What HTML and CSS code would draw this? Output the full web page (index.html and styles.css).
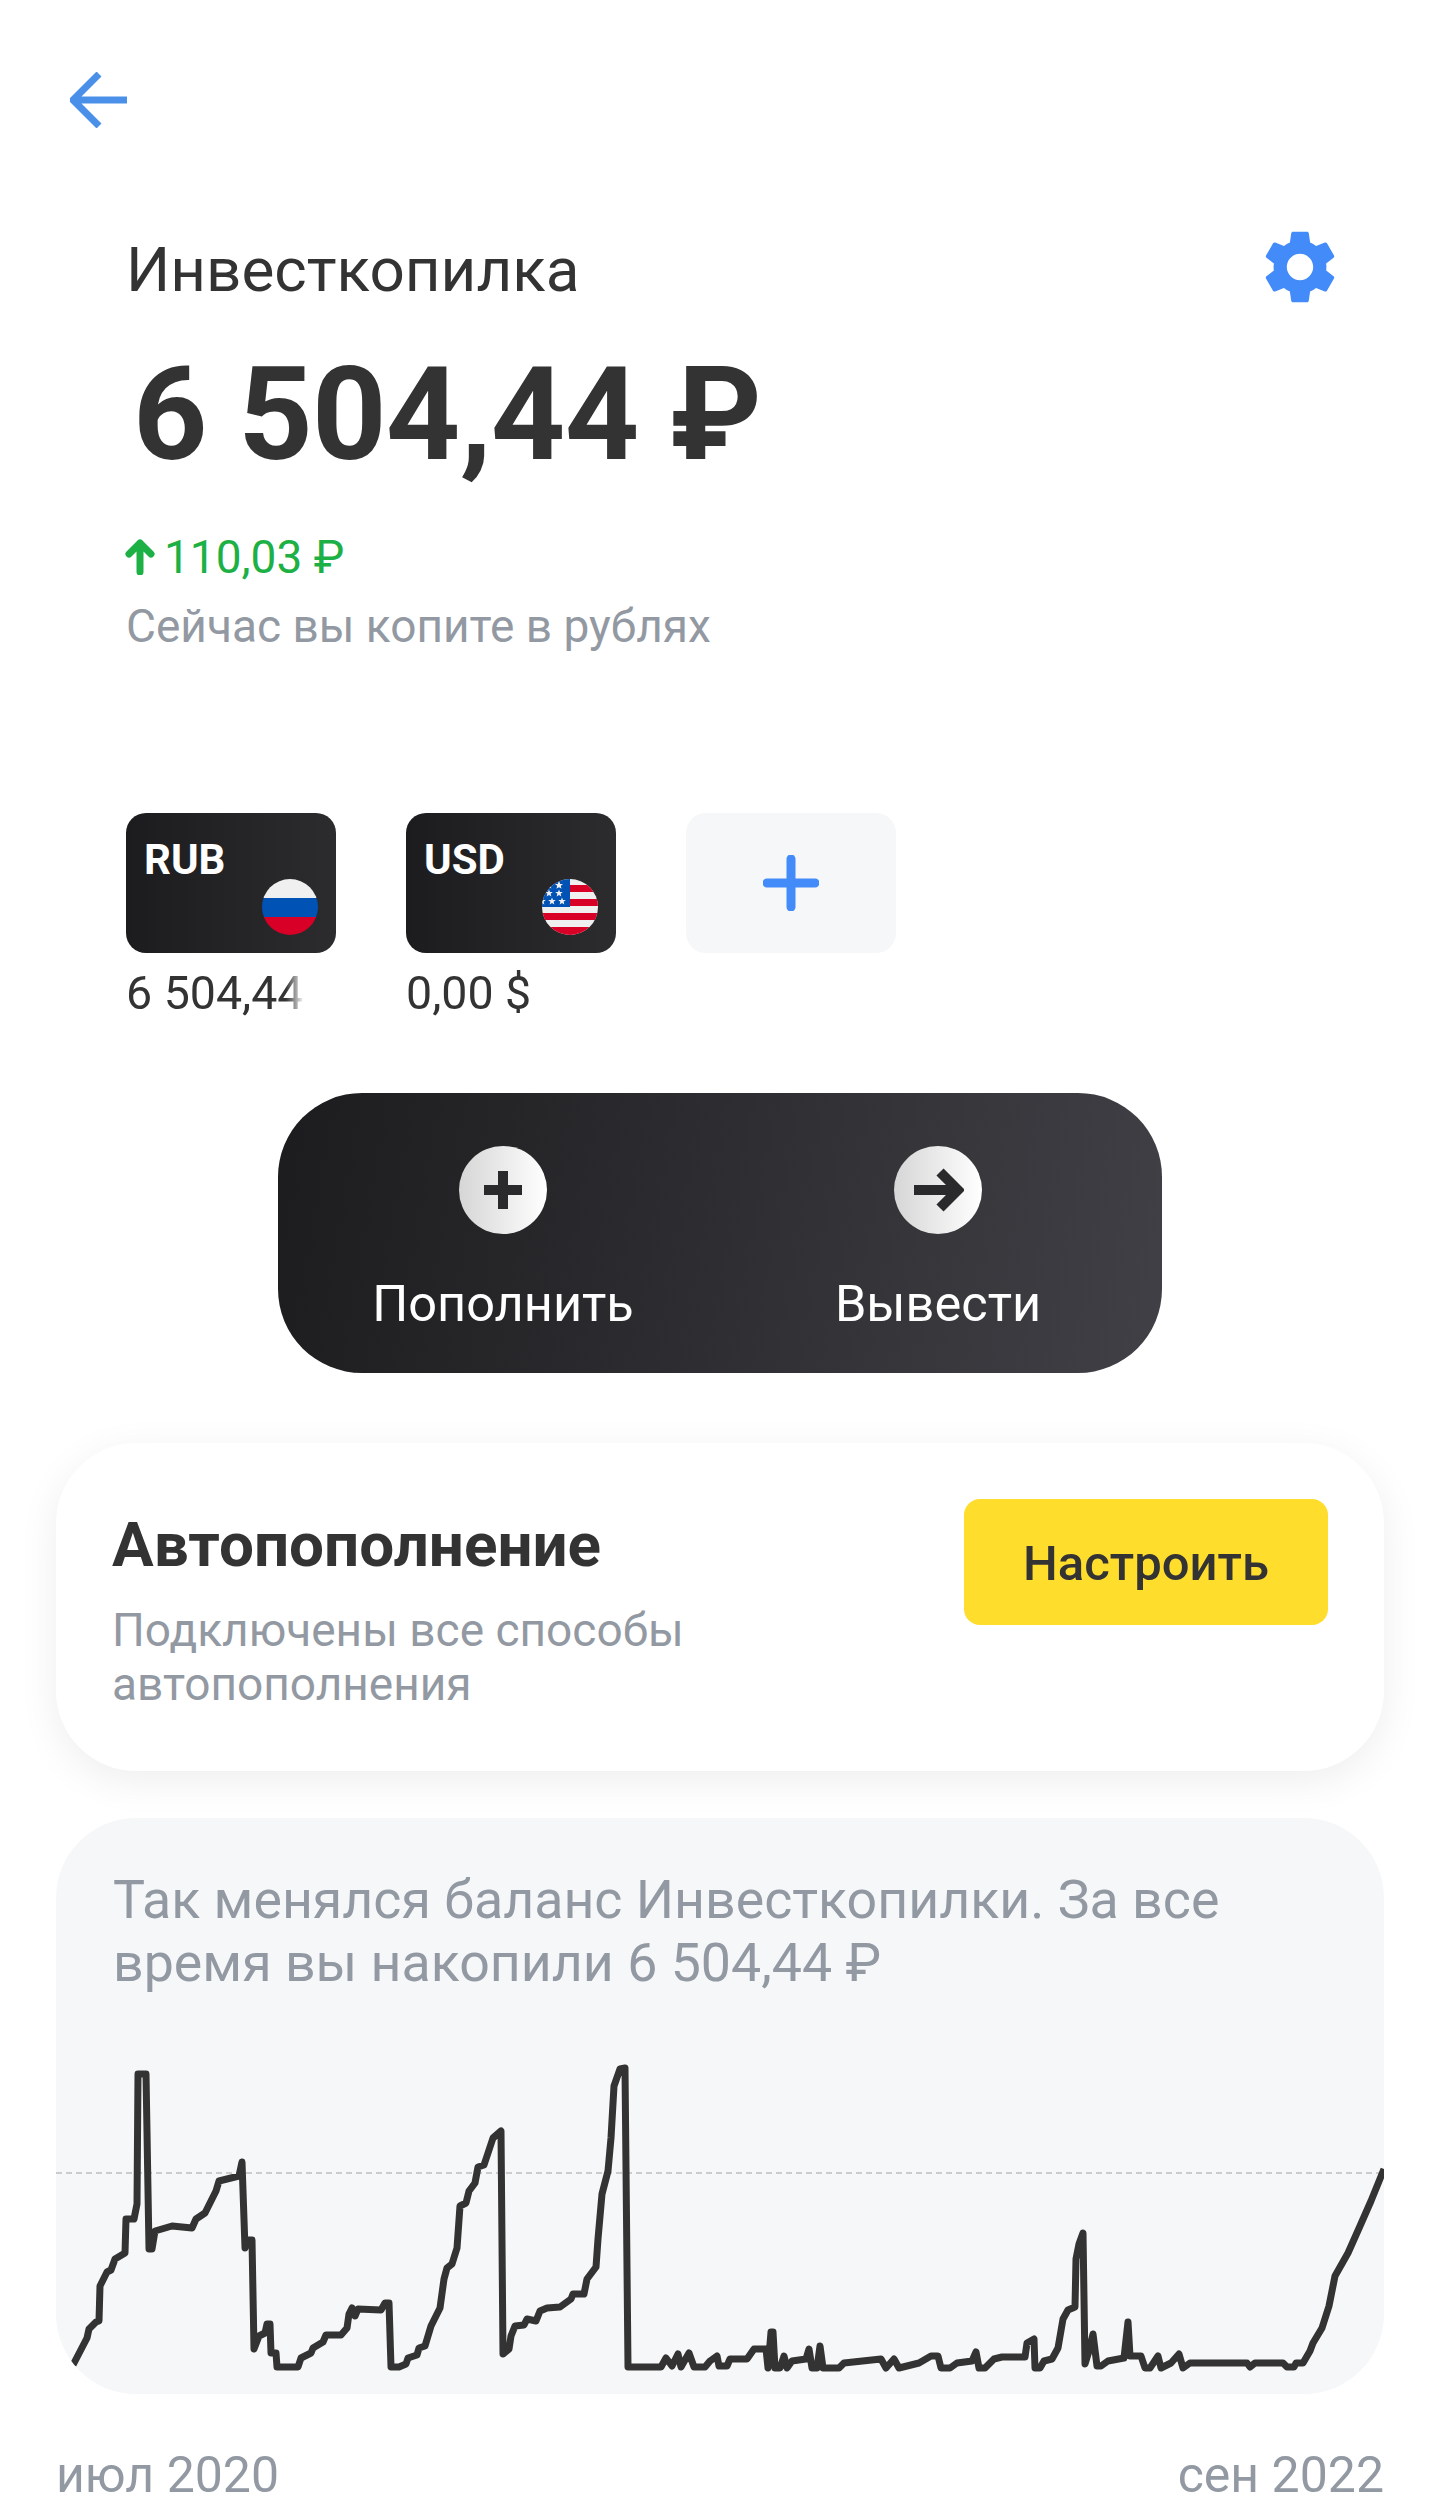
FILE: index.html
```html
<!DOCTYPE html>
<html lang="ru">
<head>
  <meta charset="UTF-8">
  <meta name="viewport" content="width=device-width, initial-scale=1.0">
  <title>Инвесткопилка</title>
  <link rel="stylesheet" href="styles.css">
</head>
<body>
  <div class="screen">
    <div class="topbar">
      <svg class="back-icon" viewBox="0 0 58 56" width="58" height="56"><path d="M57 28H3M29 2L3 28l26 26"/></svg>
    </div>

    <div class="head">
      <h1 class="title">Инвесткопилка</h1>
      <svg class="gear-icon" viewBox="0 0 24 24" width="88" height="88"><path d="M19.14 12.94c.04-.3.06-.61.06-.94 0-.32-.02-.64-.07-.94l2.03-1.58c.18-.14.23-.41.12-.61l-1.92-3.32c-.12-.22-.37-.29-.59-.22l-2.39.96c-.5-.38-1.03-.7-1.62-.94l-.36-2.54c-.04-.24-.24-.41-.48-.41h-3.84c-.24 0-.43.17-.47.41l-.36 2.54c-.59.24-1.13.57-1.62.94l-2.39-.96c-.22-.08-.47 0-.59.22L2.74 8.87c-.12.21-.08.47.12.61l2.03 1.58c-.05.3-.09.63-.09.94s.02.64.07.94l-2.03 1.58c-.18.14-.23.41-.12.61l1.92 3.32c.12.22.37.29.59.22l2.39-.96c.5.38 1.03.7 1.62.94l.36 2.54c.05.24.24.41.48.41h3.84c.24 0 .44-.17.47-.41l.36-2.54c.59-.24 1.13-.56 1.62-.94l2.39.96c.22.08.47 0 .59-.22l1.92-3.32c.12-.22.07-.47-.12-.61l-2.01-1.58zM12 15.6c-1.98 0-3.6-1.62-3.6-3.6s1.62-3.6 3.6-3.6 3.6 1.62 3.6 3.6-1.62 3.6-3.6 3.6z"/></svg>
    </div>

    <div class="amount">6 504,44 ₽</div>
    <div class="profit">
      <svg class="profit-icon" viewBox="0 0 30 36" width="30" height="36"><path d="M15 33V4M4 15L15 4l11 11"/></svg>
      <span>110,03 ₽</span>
    </div>
    <div class="note">Сейчас вы копите в рублях</div>

    <div class="tiles">
      <div class="tile-item">
        <div class="tile">
          <span class="tile-code">RUB</span>
          <svg class="flag" viewBox="0 0 56 56" width="56" height="56">
            <clipPath id="flag-ru"><circle cx="28" cy="28" r="28"/></clipPath>
            <g clip-path="url(#flag-ru)">
              <rect width="56" height="19" fill="#f0f0f0"/>
              <rect y="19" width="56" height="19" fill="#0052b4"/>
              <rect y="38" width="56" height="18" fill="#d80027"/>
            </g>
          </svg>
        </div>
        <div class="tile-amount">6 504,44</div>
      </div>
      <div class="tile-item">
        <div class="tile">
          <span class="tile-code">USD</span>
          <svg class="flag" viewBox="0 0 56 56" width="56" height="56">
            <clipPath id="flag-us"><circle cx="28" cy="28" r="28"/></clipPath>
            <g clip-path="url(#flag-us)">
              <rect width="56" height="56" fill="#f0f0f0"/>
              <rect x="28" y="6" width="28" height="7" fill="#d80027"/>
              <rect x="28" y="20" width="28" height="7" fill="#d80027"/>
              <rect y="34" width="56" height="7" fill="#d80027"/>
              <rect y="48" width="56" height="8" fill="#d80027"/>
              <rect width="28" height="28" fill="#0052b4"/>
              <g fill="#f0f0f0">
                <path id="star" d="M7 2.500l1 2.600h2.800L8.600 6.800l.8 2.700L7 7.900 4.600 9.500l.8-2.700L3.200 5.100H6z"/>
                <use href="#star" x="10"/>
                <use href="#star" x="10" y="0"/>
                <use href="#star" x="0" y="8"/>
                <use href="#star" x="10" y="8"/>
                <use href="#star" x="-7" y="16"/>
                <use href="#star" x="3" y="16"/>
                <use href="#star" x="13" y="16"/>
              </g>
            </g>
          </svg>
        </div>
        <div class="tile-amount">0,00 $</div>
      </div>
      <div class="tile-item">
        <div class="tile tile-add">
          <svg class="add-icon" viewBox="0 0 56 56" width="56" height="56"><path d="M28 4v48M4 28h48"/></svg>
        </div>
      </div>
    </div>

    <div class="actions">
      <div class="action">
        <div class="action-circle">
          <svg class="action-icon" viewBox="0 0 44 44" width="44" height="44"><path d="M22 3v38M3 22h38"/></svg>
        </div>
        <div class="action-label">Пополнить</div>
      </div>
      <div class="action">
        <div class="action-circle">
          <svg class="action-icon" viewBox="0 0 52 44" width="52" height="44"><path d="M2 22h42M28 4l18 18-18 18"/></svg>
        </div>
        <div class="action-label">Вывести</div>
      </div>
    </div>

    <div class="card">
      <div class="card-text">
        <h2 class="card-title">Автопополнение</h2>
        <p class="card-note">Подключены все способы автопополнения</p>
      </div>
      <button class="setup-btn">Настроить</button>
    </div>

    <div class="chart-panel">
      <p class="chart-text">Так менялся баланс Инвесткопилки. За все время вы накопили 6 504,44 ₽</p>
      <svg class="chart" viewBox="0 0 1328 362" width="1328" height="362">
        <line class="chart-avg" x1="0" y1="142" x2="1328" y2="142"/>
        <polyline class="chart-line" points="17,334 31,307 33,298 40,291 43,290 44,255 51,241 55,239 59,228 69,222 70,188 78,188 81,173 82,43 90,43 93,218 96,218 99,200 116,195 136,197 140,188 149,182 160,160 163,150 183,145 186,131 189,217 192,209 196,209 198,318 203,305 209,302 211,293 214,293 215,322 220,322 221,336 242,336 245,327 255,322 257,317 267,311 270,304 285,304 291,297 293,283 296,277 299,285 302,278 325,279 329,272 333,272 335,336 343,336 350,333 352,327 361,324 363,317 369,315 375,295 384,277 388,248 391,237 396,233 401,217 404,175 410,172 413,160 419,152 422,136 428,134 437,107 445,100 447,323 453,318 455,305 459,295 468,294 471,288 480,290 484,280 491,277 504,276 515,268 517,263 528,263 531,248 540,236 542,208 546,163 552,140 555,107 558,55 564,38 569,37 572,336 605,336 610,327 616,335 622,323 625,336 633,322 638,336 649,336 654,330 661,325 663,335 671,335 674,328 691,328 698,318 710,318 712,337 715,301 717,301 719,337 724,337 728,325 731,337 736,330 750,328 753,318 756,337 761,337 764,315 767,337 783,337 788,332 825,328 830,337 838,328 843,337 863,332 875,325 882,325 885,337 894,337 901,332 916,330 920,321 923,337 929,337 938,328 946,326 969,326 971,312 978,308 979,337 984,337 988,330 996,328 1002,317 1007,288 1012,279 1019,276 1020,228 1023,213 1027,202 1029,333 1033,320 1037,303 1041,335 1045,335 1052,330 1068,327 1072,291 1074,325 1085,325 1089,337 1094,337 1102,325 1105,337 1115,332 1123,323 1127,337 1134,332 1191,332 1194,336 1199,332 1227,332 1231,336 1238,336 1240,332 1247,332 1254,320 1257,312 1266,297 1273,275 1279,245 1292,222 1304,195 1315,170 1328,138"/>
      </svg>
    </div>

    <div class="chart-axis">
      <span>июл 2020</span>
      <span>сен 2022</span>
    </div>
  </div>
</body>
</html>
```

FILE: styles.css
```css
body {
  margin: 0;
  background-color: white;
  font-family: 'Roboto', sans-serif;
  color: #333;
}

.screen {
  width: 1439px;
  height: 2505px;
  overflow: hidden;
}

.topbar {
  padding: 72px 0 0 70px;
  height: 56px;
}

.back-icon {
  display: block;
  fill: none;
  stroke: #4a8fe8;
  stroke-width: 7;
}

.head {
  display: flex;
  justify-content: space-between;
  align-items: center;
  margin-top: 95px;
  padding: 0 95px 0 126px;
}

.title {
  margin: 0;
  padding-top: 5px;
  font-size: 62px;
  font-weight: 400;
  line-height: 83px;
}

.gear-icon {
  fill: #428bf9;
}

.amount {
  margin: 29px 0 0 133px;
  font-size: 130px;
  font-weight: 700;
  letter-spacing: -0.8px;
  line-height: 150px;
  white-space: nowrap;
}

.profit {
  display: flex;
  align-items: center;
  gap: 9px;
  margin: 37px 0 0 125px;
  color: #1cb045;
  font-size: 46px;
  line-height: 60px;
}

.profit-icon {
  fill: none;
  stroke: #1cb045;
  stroke-width: 7;
  stroke-linecap: round;
  stroke-linejoin: round;
}

.note {
  margin: 9px 0 0 126px;
  color: #9299a2;
  font-size: 46px;
  line-height: 60px;
}

.tiles {
  display: flex;
  gap: 70px;
  margin: 157px 0 0 126px;
}

.tile-item {
  width: 210px;
}

.tile {
  position: relative;
  height: 140px;
  border-radius: 20px;
  background: linear-gradient(90deg, #1c1c1e, #2c2c2e);
}

.tile-code {
  display: block;
  padding: 23px 0 0 18px;
  color: white;
  font-size: 42px;
  font-weight: 700;
  line-height: 47px;
}

.flag {
  position: absolute;
  right: 18px;
  bottom: 18px;
}

.tile-add {
  display: flex;
  justify-content: center;
  align-items: center;
  background: #f6f7f8;
}

.add-icon {
  fill: none;
  stroke: #428bf9;
  stroke-width: 9;
  stroke-linecap: round;
}

.tile-amount {
  margin-top: 10px;
  font-size: 46.500px;
  line-height: 60px;
  white-space: nowrap;
  -webkit-mask-image: linear-gradient(90deg, #000 160px, transparent 178px);
  mask-image: linear-gradient(90deg, #000 160px, transparent 178px);
}

.actions {
  display: flex;
  gap: 135px;
  box-sizing: border-box;
  width: 884px;
  height: 280px;
  margin: 70px 0 0 278px;
  padding: 53px 0 0 75px;
  border-radius: 84px;
  background: linear-gradient(100deg, #1c1c1e, #404046);
}

.action {
  display: flex;
  flex-direction: column;
  align-items: center;
  width: 300px;
}

.action-circle {
  display: flex;
  justify-content: center;
  align-items: center;
  width: 88px;
  height: 88px;
  border-radius: 50%;
  background: linear-gradient(90deg, #d6d6d6, white);
}

.action-icon {
  fill: none;
  stroke: #2a2a2c;
  stroke-width: 10;
}

.action-label {
  margin-top: 40px;
  color: white;
  font-size: 50.500px;
  line-height: 60px;
}

.card {
  display: flex;
  justify-content: space-between;
  align-items: flex-start;
  box-sizing: border-box;
  width: 1328px;
  height: 328px;
  margin: 70px 0 0 56px;
  padding: 56px 56px 0;
  border-radius: 80px;
  background: white;
  box-shadow: 0 10px 40px rgba(0,0,0,0.07);
}

.card-text {
  width: 640px;
  margin-top: 11px;
}

.card-title {
  margin: 0;
  font-size: 62px;
  font-weight: 700;
  line-height: 70px;
}

.card-note {
  margin: 23px 0 0;
  color: #9299a2;
  font-size: 46px;
  line-height: 54px;
}

.setup-btn {
  width: 364px;
  height: 126px;
  padding-top: 4px;
  border: none;
  border-radius: 16px;
  background: #ffdd2d;
  color: #333;
  font-family: inherit;
  font-size: 49px;
  font-weight: 500;
}

.chart-panel {
  position: relative;
  width: 1328px;
  height: 576px;
  margin: 47px 0 0 56px;
  overflow: hidden;
  border-radius: 80px;
  background: #f6f7f8;
}

.chart-text {
  margin: 50px 57px 37px;
  color: #9299a2;
  font-size: 53.700px;
  line-height: 63px;
}

.chart {
  display: block;
}

.chart-avg {
  stroke: #ccc;
  stroke-width: 2;
  stroke-dasharray: 6 4;
}

.chart-line {
  fill: none;
  stroke: #333;
  stroke-width: 7;
  stroke-linejoin: round;
}

.chart-axis {
  display: flex;
  justify-content: space-between;
  width: 1328px;
  margin: 55px 0 0 56px;
  color: #9299a2;
  font-size: 50px;
  line-height: 52px;
}
```
